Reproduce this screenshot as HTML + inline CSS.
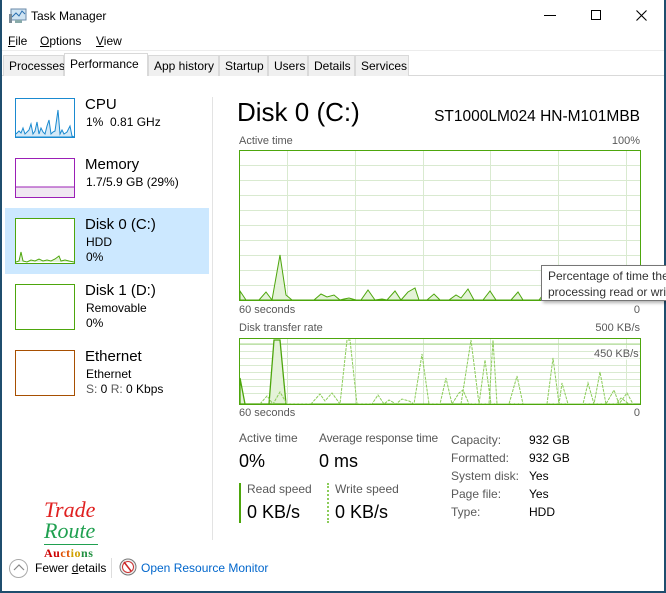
<!DOCTYPE html>
<html><head><style>
*{margin:0;padding:0;box-sizing:border-box}
body{width:666px;height:593px;overflow:hidden;background:#fff;font-family:"Liberation Sans",sans-serif;color:#000;position:relative}
.a{position:absolute;white-space:nowrap}
.s12{font-size:12px}.s13{font-size:13px}
.g{color:#595959}
.tab{position:absolute;top:55px;height:21px;border:1px solid #d9d9d9;border-bottom:none;background:#f0f0f0;font-size:12px;padding:3px 0 0 5px}
.thumb{position:absolute;left:15px;width:60px;background:#fff}
</style></head><body>
<div class="a" style="left:0;top:0;width:666px;height:593px;border:1px solid #1f4e6e;border-top:none;border-right:2px solid #1f4e6e;border-left:2px solid #1f4e6e;border-bottom:2px solid #1f4e6e"></div>
<!-- title -->
<svg class="a" style="left:9px;top:8px" width="18" height="16"><rect x="2" y="1" width="15" height="11" fill="#cfe3f2" stroke="#6a8aa8"/><polyline points="3,9 7,5 10,8 13,3 16,6" fill="none" stroke="#2a6fb0"/><rect x="6" y="12" width="7" height="3" fill="#8aa"/><rect x="0" y="6" width="3" height="9" fill="#7a8a96"/></svg>
<div class="a s12" style="left:31px;top:9px">Task Manager</div>
<div class="a" style="left:544px;top:15px;width:12px;height:1px;background:#000"></div>
<div class="a" style="left:591px;top:10px;width:10px;height:10px;border:1px solid #000"></div>
<svg class="a" style="left:636px;top:10px" width="11" height="11"><path d="M0.5,0.5 L10.5,10.5 M10.5,0.5 L0.5,10.5" stroke="#000" stroke-width="1.1"/></svg>
<!-- menu -->
<div class="a s12" style="left:8px;top:34px"><u>F</u>ile</div>
<div class="a s12" style="left:40px;top:34px"><u>O</u>ptions</div>
<div class="a s12" style="left:96px;top:34px"><u>V</u>iew</div>
<div class="a" style="left:2px;top:50px;width:662px;height:1px;background:#ececec"></div>
<!-- tabs -->
<div class="a" style="left:2px;top:75px;width:662px;height:1px;background:#d9d9d9"></div>
<div class="tab" style="left:3px;width:61px">Processes</div>
<div class="tab" style="left:64px;width:84px;top:53px;height:23px;background:#fff;padding-top:3px">Performance</div>
<div class="tab" style="left:148px;width:71px">App history</div>
<div class="tab" style="left:219px;width:49px">Startup</div>
<div class="tab" style="left:268px;width:40px">Users</div>
<div class="tab" style="left:308px;width:47px">Details</div>
<div class="tab" style="left:355px;width:54px">Services</div>
<!-- left panel -->
<div class="a" style="left:5px;top:208px;width:204px;height:66px;background:#cce8ff"></div>
<div class="a" style="left:212px;top:97px;width:1px;height:443px;background:#e3e3e3"></div>
<svg class="thumb" style="top:98px;height:40px" width="60" height="40"><rect x="0.5" y="0.5" width="59" height="39" fill="#fff" stroke="#1a8ad0"/><polyline points="1,36 4,33 6,35 8,30 10,36 12,34 14,32 16,26 18,36 20,33 22,24 24,36 26,30 28,34 30,36 32,28 34,22 36,36 38,34 40,33 43,12 45,36 47,32 49,36 52,34 55,28 57,38 59,39 1,39" fill="#d4e9f7" stroke="#1a8ad0"/></svg>
<svg class="thumb" style="top:158px;height:40px" width="60" height="40"><rect x="0.5" y="0.5" width="59" height="39" fill="#fff" stroke="#9b1fb6"/><rect x="1" y="29" width="58" height="10" fill="#f0e8f2"/><line x1="1" y1="29" x2="59" y2="29" stroke="#9b1fb6"/></svg>
<svg class="thumb" style="top:218px;height:46px" width="60" height="46"><rect x="0.5" y="0.5" width="59" height="45" fill="#fff" stroke="#4da60c"/><polyline points="1,44 4,43 6,34 8,43 12,44 16,42 20,43 24,41 28,43 32,42 36,43 40,41 44,38 46,43 50,42 54,43 59,44" fill="#e4f2d8" stroke="#4da60c"/></svg>
<div class="thumb" style="top:284px;height:46px;border:1px solid #4da60c"></div>
<div class="thumb" style="top:350px;height:46px;border:1px solid #a74f01"></div>
<div class="a" style="left:85px;top:96px;font-size:15px">CPU</div>
<div class="a s12" style="left:86px;top:115px">1%&nbsp; 0.81 GHz</div>
<div class="a" style="left:85px;top:156px;font-size:15px">Memory</div>
<div class="a s12" style="left:86px;top:175px">1.7/5.9 GB (29%)</div>
<div class="a" style="left:85px;top:216px;font-size:15px">Disk 0 (C:)</div>
<div class="a s12" style="left:86px;top:235px">HDD</div>
<div class="a s12" style="left:86px;top:250px">0%</div>
<div class="a" style="left:85px;top:282px;font-size:15px">Disk 1 (D:)</div>
<div class="a s12" style="left:86px;top:301px">Removable</div>
<div class="a s12" style="left:86px;top:316px">0%</div>
<div class="a" style="left:85px;top:348px;font-size:15px">Ethernet</div>
<div class="a s12" style="left:86px;top:367px">Ethernet</div>
<div class="a s12" style="left:86px;top:382px"><span class="g">S:</span> 0 <span class="g">R:</span> 0 Kbps</div>
<!-- right header -->
<div class="a" style="left:237px;top:97px;font-size:26px">Disk 0 (C:)</div>
<div class="a" style="right:26px;top:108px;font-size:15.5px">ST1000LM024 HN-M101MBB</div>
<div class="a s12 g" style="left:239px;top:135px;font-size:11px">Active time</div>
<div class="a g" style="right:26px;top:135px;font-size:11px">100%</div>
<svg class="a" style="left:239px;top:150px" width="402" height="151">
<g stroke="#d9ead0" stroke-width="1">
<line x1="0" y1="15.5" x2="402" y2="15.5"/><line x1="0" y1="30.5" x2="402" y2="30.5"/><line x1="0" y1="45.5" x2="402" y2="45.5"/><line x1="0" y1="60.5" x2="402" y2="60.5"/><line x1="0" y1="75.5" x2="402" y2="75.5"/><line x1="0" y1="90.5" x2="402" y2="90.5"/><line x1="0" y1="105.5" x2="402" y2="105.5"/><line x1="0" y1="120.5" x2="402" y2="120.5"/><line x1="0" y1="135.5" x2="402" y2="135.5"/>
<line x1="48.5" y1="0" x2="48.5" y2="151"/><line x1="116.5" y1="0" x2="116.5" y2="151"/><line x1="184.5" y1="0" x2="184.5" y2="151"/><line x1="251.5" y1="0" x2="251.5" y2="151"/><line x1="319.5" y1="0" x2="319.5" y2="151"/><line x1="387.5" y1="0" x2="387.5" y2="151"/>
</g>
<polygon points="1,150 1,141 7,150 20,150 27,142 33,150 41,105 47,145 53,150 75,150 82,144 88,147 95,145 101,150 105,149 110,148 117,150 122,150 129,140 136,150 143,149 148,150 156,141 162,150 169,142 176,138 180,150 188,150 195,144 201,150 210,150 217,145 222,148 229,139 235,150 244,150 251,141 257,150 272,150 279,142 284,150 300,150 307,141 312,150" fill="#e4f2d8" stroke="#4da60c"/>
<rect x="0.5" y="0.5" width="401" height="150" fill="none" stroke="#4da60c"/>
</svg>
<div class="a g" style="left:239px;top:304px;font-size:11px">60 seconds</div>
<div class="a g" style="right:26px;top:304px;font-size:11px">0</div>
<div class="a g" style="left:239px;top:322px;font-size:11px">Disk transfer rate</div>
<div class="a g" style="right:26px;top:322px;font-size:11px">500 KB/s</div>
<svg class="a" style="left:239px;top:338px" width="402" height="67">
<g stroke="#d9ead0"><line x1="0" y1="6.5" x2="402" y2="6.5"/><line x1="0" y1="13.5" x2="402" y2="13.5"/><line x1="0" y1="20.5" x2="402" y2="20.5"/><line x1="0" y1="27.5" x2="402" y2="27.5"/><line x1="0" y1="34.5" x2="402" y2="34.5"/><line x1="0" y1="41.5" x2="402" y2="41.5"/><line x1="0" y1="48.5" x2="402" y2="48.5"/><line x1="0" y1="55.5" x2="402" y2="55.5"/>
<line x1="48.5" y1="0" x2="48.5" y2="67"/><line x1="116.5" y1="0" x2="116.5" y2="67"/><line x1="184.5" y1="0" x2="184.5" y2="67"/><line x1="251.5" y1="0" x2="251.5" y2="67"/><line x1="319.5" y1="0" x2="319.5" y2="67"/><line x1="387.5" y1="0" x2="387.5" y2="67"/></g>
<line x1="0" y1="6" x2="402" y2="6" stroke="#a8d88a"/>
<polygon points="1,66 1,40 6,66 30,66 35,2 41,2 47,66" fill="#e4f2d8" stroke="#4da60c" stroke-width="1.3"/>
<line x1="0" y1="66" x2="402" y2="66" stroke="#4da60c"/>
<polyline points="21,66 28,58 34,66 41,54 48,66 72,66 81,56 86,63 93,55 101,66 108,2 111,2 118,66 133,66 139,57 145,66 150,62 157,66 163,61 170,63 175,66 183,16 190,66 201,66 207,40 213,66 220,55 224,52 230,66 240,66 246,22 252,66 308,66 314,20 320,66 323,45 329,66 344,66 349,45 355,66 361,34 367,66 375,52 380,66 388,55 394,66" fill="none" stroke="#8ccc5a" stroke-dasharray="3,1"/>
<polyline points="222,66 232,2 240,66 250,66 254,2 258,66 270,66 278,38 284,66 370,66 377,66 382,60 390,66" fill="none" stroke="#8ccc5a" stroke-dasharray="3,1"/>
<rect x="0.5" y="0.5" width="401" height="66" fill="none" stroke="#4da60c"/>
</svg>
<div class="a g" style="left:594px;top:348px;font-size:11px;background:rgba(255,255,255,.6)">450 KB/s</div>
<div class="a g" style="left:239px;top:407px;font-size:11px">60 seconds</div>
<div class="a g" style="right:26px;top:407px;font-size:11px">0</div>
<!-- tooltip -->
<div class="a" style="left:541px;top:265px;width:130px;height:36px;background:#fff;border:1px solid #767676;box-shadow:2px 2px 3px rgba(0,0,0,.3);font-size:12px;padding:2px 0 0 6px;line-height:16px;color:#333">Percentage of time the<br>processing read or write</div>
<!-- stats -->
<div class="a g s12" style="left:239px;top:431px">Active time</div>
<div class="a g s12" style="left:319px;top:431px;letter-spacing:-0.2px">Average response time</div>
<div class="a" style="left:239px;top:451px;font-size:18px">0%</div>
<div class="a" style="left:319px;top:451px;font-size:18px">0 ms</div>
<div class="a" style="left:239px;top:483px;width:2px;height:40px;background:#4da60c"></div>
<div class="a" style="left:327px;top:483px;width:0;height:40px;border-left:2px dotted #8ccc5a"></div>
<div class="a g s12" style="left:247px;top:482px">Read speed</div>
<div class="a g s12" style="left:335px;top:482px">Write speed</div>
<div class="a" style="left:247px;top:502px;font-size:18px">0 KB/s</div>
<div class="a" style="left:335px;top:502px;font-size:18px">0 KB/s</div>
<div class="a g s12" style="left:451px;top:431px;line-height:18px">Capacity:<br>Formatted:<br>System disk:<br>Page file:<br>Type:</div>
<div class="a s12" style="left:529px;top:431px;line-height:18px">932 GB<br>932 GB<br>Yes<br>Yes<br>HDD</div>
<!-- logo -->
<div class="a" style="left:44px;top:499px;font-family:'Liberation Serif',serif;font-style:italic;font-size:22px;color:#e02020;line-height:22px">Trade</div>
<div class="a" style="left:44px;top:520px;font-family:'Liberation Serif',serif;font-style:italic;font-size:22px;color:#20a050;line-height:22px">Route</div>
<div class="a" style="left:44px;top:544px;width:54px;height:1px;background:#20a050"></div>
<div class="a" style="left:44px;top:546px;font-family:'Liberation Serif',serif;font-weight:bold;font-size:12px;letter-spacing:.5px"><span style="color:#c00">Au</span><span style="color:#e05000">ct</span><span style="color:#d0a000">io</span><span style="color:#209040">ns</span></div>
<!-- footer -->
<div class="a" style="left:9px;top:559px;width:19px;height:19px;border:1px solid #aaa;border-radius:50%"></div>
<svg class="a" style="left:13px;top:564px" width="12" height="8"><polyline points="1,6 6,1 11,6" fill="none" stroke="#888" stroke-width="1.2"/></svg>
<div class="a s12" style="left:35px;top:561px">Fewer <u>d</u>etails</div>
<div class="a" style="left:111px;top:558px;width:1px;height:20px;background:#ddd"></div>
<svg class="a" style="left:119px;top:558px" width="18" height="18"><circle cx="9" cy="9" r="8" fill="#eee" stroke="#777"/><circle cx="9" cy="9" r="5.5" fill="#fff" stroke="#c33"/><line x1="5" y1="4" x2="12" y2="13" stroke="#c22" stroke-width="1.5"/></svg>
<div class="a s12" style="left:141px;top:561px;color:#0066cc">Open Resource Monitor</div>
</body></html>
